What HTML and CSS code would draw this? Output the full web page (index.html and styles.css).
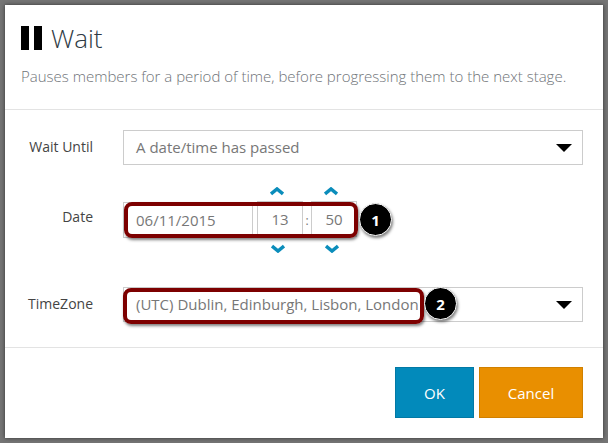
FILE: index.html
```html
<!DOCTYPE html>
<html lang="en">
<head>
  <meta charset="UTF-8" />
  <title>Wait</title>
  <link rel="stylesheet" href="styles.css">
</head>
<body>

  <div class="dialog">
    <div class="dialog-head">
      <h1><span class="pause"><i></i><i></i></span> Wait</h1>
      <p>Pauses members for a period of time, before progressing them to the next stage.</p>
    </div>

    <div class="dialog-body">
      <div class="row row-until">
        <label>Wait Until</label>
        <div class="select">
          <span>A date/time has passed</span>
          <b class="caret"></b>
        </div>
      </div>

      <div class="row row-date">
        <label class="label-date">Date</label>
        <div class="date-group">
          <div class="field field-date">06/11/2015</div>
          <div class="spin">
            <svg class="chev" viewBox="0 0 14 9"><path d="M1 7 7 2l6 5" /></svg>
            <div class="field field-num">13</div>
            <svg class="chev chev-down" viewBox="0 0 14 9"><path d="M1 2l6 5 6-5" /></svg>
          </div>
          <span class="colon">:</span>
          <div class="spin">
            <svg class="chev" viewBox="0 0 14 9"><path d="M1 7 7 2l6 5" /></svg>
            <div class="field field-num">50</div>
            <svg class="chev chev-down" viewBox="0 0 14 9"><path d="M1 2l6 5 6-5" /></svg>
          </div>
        </div>
      </div>

      <div class="row row-zone">
        <label>TimeZone</label>
        <div class="select">
          <span>(UTC) Dublin, Edinburgh, Lisbon, London</span>
          <b class="caret"></b>
        </div>
      </div>
    </div>

    <div class="dialog-foot">
      <button class="btn btn-ok">OK</button>
      <button class="btn btn-cancel">Cancel</button>
    </div>

    <!-- callouts over the screenshot -->
    <div class="mark mark-date"></div>
    <div class="badge badge-date">1</div>
    <div class="mark mark-zone"></div>
    <div class="badge badge-zone">2</div>
  </div>

</body>
</html>
```

FILE: styles.css
```css
* {
  box-sizing: border-box;
}

html, body {
  height: 100%;
}

body {
  margin: 0;
  padding: 5px;
  background: #757575;
  font-family: "Open Sans", Arial, sans-serif;
  color: #6f7378;
  overflow: hidden;
}

.dialog {
  position: relative;
  width: 598px;
  height: 433px;
  background: #fff;
  box-shadow: 0 0 4px #333;
}

.dialog-head {
  height: 105px;
  padding: 15px 16px 0 16px;
  border-bottom: 1px solid #e3e3e3;
}

h1 {
  margin: 0;
  font-size: 26px;
  line-height: 36px;
  font-weight: 300;
  color: #2f3a44;
  display: flex;
  align-items: center;
  gap: 9px;
}

.pause {
  display: flex;
  gap: 5px;
}

.pause i {
  display: block;
  width: 8px;
  height: 24px;
  background: #000;
}

.dialog-head p {
  margin: 10px 0 0 0;
  font-size: 15px;
  line-height: 20px;
  font-weight: 300;
}

.dialog-body {
  height: 238px;
  padding-top: 20px;
  border-bottom: 1px solid #e3e3e3;
}

.row {
  display: flex;
  align-items: center;
}

.row label {
  width: 118px;
  font-size: 14px;
  color: #444;
  padding: 0 30px 2px 0;
  text-align: right;
}

.row .label-date {
  padding-bottom: 8px;
}

.row-date {
  margin-top: 22px;
}

.row-zone {
  margin-top: 34px;
}

.select {
  width: 460px;
  height: 35px;
  border: 1px solid #ccc;
  display: flex;
  align-items: center;
  justify-content: space-between;
  padding: 0 10px 0 12px;
  font-size: 15px;
  color: #777;
}

.select span {
  padding-bottom: 2px;
}

.caret {
  width: 0;
  height: 0;
  border-left: 8px solid transparent;
  border-right: 8px solid transparent;
  border-top: 8px solid #000;
}

.date-group {
  display: flex;
  align-items: center;
  font-size: 15px;
  color: #777;
}

.field {
  height: 36px;
  border: 1px solid #ccc;
  display: flex;
  align-items: center;
}

.field-date {
  width: 130px;
  padding-left: 12px;
  margin-right: 4px;
}

.field-num {
  width: 46px;
  justify-content: center;
}

.spin {
  display: flex;
  flex-direction: column;
  align-items: center;
  gap: 5px;
}

.colon {
  width: 8px;
  text-align: center;
  font-size: 12px;
}

.chev {
  width: 14px;
  height: 9px;
  margin-right: 7px;
  fill: none;
  stroke: #0b8dbb;
  stroke-width: 3.5;
}

.chev-down {
  margin: 2px 5px 0 0;
}

.dialog-foot {
  display: flex;
  justify-content: flex-end;
  gap: 5px;
  padding: 19px 20px 0 0;
}

.btn {
  height: 51px;
  border: 1px solid;
  color: #fff;
  font-family: inherit;
  font-size: 15px;
  padding: 0;
}

.btn-ok {
  width: 79px;
  background: #028abb;
  border-color: #0279a5;
}

.btn-cancel {
  width: 104px;
  background: #e98f00;
  border-color: #d08000;
}

.mark {
  position: absolute;
  border: 4px solid #7d0000;
  border-radius: 8px;
  box-shadow: 1px 2px 3px rgba(0, 0, 0, 0.5);
}

.mark-date {
  left: 119px;
  top: 197px;
  width: 234px;
  height: 36px;
}

.mark-zone {
  left: 118px;
  top: 283px;
  width: 301px;
  height: 36px;
}

.badge {
  position: absolute;
  width: 33px;
  height: 33px;
  border-radius: 50%;
  background: #000;
  border: 1px solid #fff;
  box-shadow: 1px 2px 3px rgba(0, 0, 0, 0.5);
  color: #fff;
  font-size: 15px;
  font-weight: 700;
  display: flex;
  align-items: center;
  justify-content: center;
}

.badge-date {
  left: 354px;
  top: 198px;
}

.badge-zone {
  left: 419px;
  top: 282px;
}
```
